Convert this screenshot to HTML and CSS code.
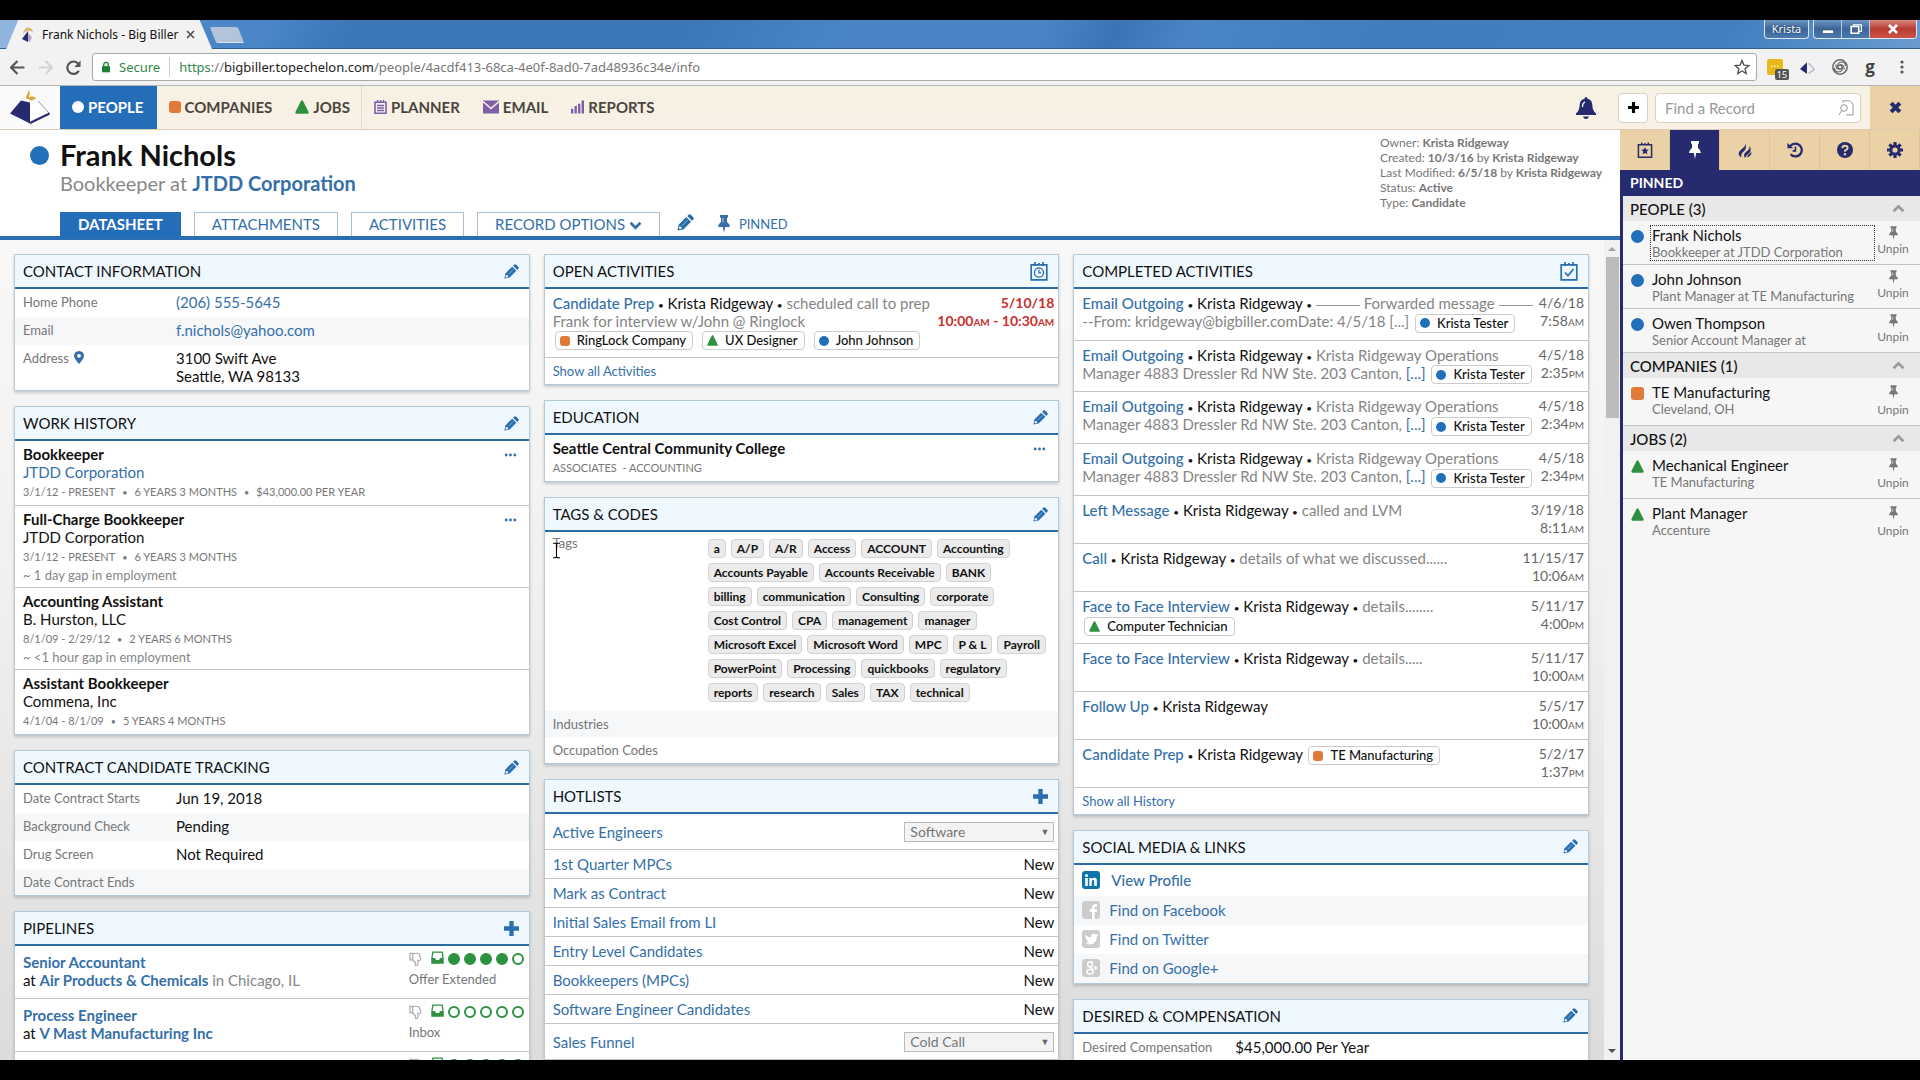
FILE: index.html
```html
<!DOCTYPE html>
<html lang="en">
<head>
  <meta charset="UTF-8">
  <meta name="viewport" content="width=device-width, initial-scale=1.0">
  <title>Frank Nichols - Big Biller</title>
  <link rel="stylesheet" href="styles.css">
</head>
<body>
  <!-- icon sprite -->
  <svg class="sprite" aria-hidden="true">
    <symbol id="i-pencil" viewBox="0 0 16 16"><path d="M.5 15.500l1-5.500L8.700 2.800l4.500 4.500L6 14.500zM9.700 1.900l1.400-1.400q.8-.6 1.600 0l2.800 2.800q.6.800 0 1.600l-1.400 1.400z"/><path d="M4.800 11l5-5" stroke="#9cc3e6" stroke-width=".8"/><circle cx="3" cy="13" r="1.300" fill="#e4f1fc"/></symbol>
    <symbol id="i-plus" viewBox="0 0 14 14"><path d="M5 0h4v5h5v4H9v5H5V9H0V5h5z"/></symbol>
    <symbol id="i-pin" viewBox="0 0 12 18"><path d="M2 0h8v2.200l-1 .7v4Q11.800 8.700 12 12H7.200L6 18l-1.200-6H0q.2-3.300 3-5.100v-4l-1-.7z"/><path d="M5 3v4.500" stroke="#fff" stroke-opacity=".7"/></symbol>
    <symbol id="i-triangle" viewBox="0 0 14 14"><path d="M7 1.500L12.500 12.500H1.500z" stroke="currentColor" stroke-width="2.400" stroke-linejoin="round"/></symbol>
    <symbol id="i-up" viewBox="0 0 12 8"><path d="M1.500 6.500L6 2l4.500 4.500" fill="none" stroke="currentColor" stroke-width="2.400"/></symbol>
    <symbol id="i-down" viewBox="0 0 14 10"><path d="M1.500 2L7 7.500 12.500 2" fill="none" stroke="currentColor" stroke-width="3"/></symbol>
    <symbol id="i-dots" viewBox="0 0 12 4"><circle cx="1.700" cy="2" r="1.400"/><circle cx="6" cy="2" r="1.400"/><circle cx="10.300" cy="2" r="1.400"/></symbol>
    <symbol id="i-thumb" viewBox="0 0 14 16"><path d="M1 1.500h3v7H1zM4 2q4-1.500 7 0l1.800 5.500q-.2 1.500-1.800 1.500H9.500q.5 3-.3 4.700-.7 1.300-2.200.8V11.500L4 8.500" fill="none" stroke="#aaa" stroke-width="1.300"/></symbol>
    <symbol id="i-inbox" viewBox="0 0 14 14"><path d="M1 7.500L2 1.300h10l1 6.200V13H1z" fill="#fff" stroke="#2d9140" stroke-width="1.400"/><path d="M1 7.500h3.300l1 2.300h3.400l1-2.300H13V13H1z" fill="#2d9140"/></symbol>
    <symbol id="i-cal-clock" viewBox="0 0 18 19"><path d="M1.200 2.800h15.600v15H1.200zM5 0v4M13 0v4M9 1v2.500" fill="none" stroke="currentColor" stroke-width="1.700"/><circle cx="9" cy="10.600" r="4.600" fill="none" stroke="currentColor" stroke-width="1.300"/><path d="M9 7.800v3h2.200" fill="none" stroke="currentColor" stroke-width="1.200"/></symbol>
    <symbol id="i-cal-check" viewBox="0 0 18 19"><path d="M1.200 2.800h15.600v15H1.200zM5 0v4M13 0v4M9 1v2.500" fill="none" stroke="currentColor" stroke-width="1.700"/><path d="M5 10.500l3 3.200L13.500 7" fill="none" stroke="currentColor" stroke-width="1.700"/></symbol>
    <symbol id="i-flame" viewBox="0 0 16 18"><path d="M8.500 0Q9.500 3.500 6 6.500T1.500 11Q-.5 15 4 17.500 2.800 13.500 6.200 11 10.500 8 8.500 0zM13.500 4.500Q13.500 8 10.500 10T7 14q-.5 2 1 4 2-4 5-5.500Q15.500 10 13.500 4.500zM15.300 11q-1.200 2-3.200 3-1.800 1.200-1.600 3.300Q15.500 16 15.300 11z"/></symbol>
    <symbol id="i-history" viewBox="0 0 18 18"><path d="M3.500 4.500Q6 1.800 9.500 1.800a7.200 7.200 0 1 1-5.500 12" fill="none" stroke="currentColor" stroke-width="2.500"/><path d="M.5 1l6.500 6H.5z"/><path d="M9.500 5v5H6.300" fill="none" stroke="currentColor" stroke-width="1.800"/></symbol>
    <symbol id="i-help" viewBox="0 0 16 16"><circle cx="8" cy="8" r="8"/><path d="M5.300 6.200Q5.500 3.800 8 3.800t2.700 2.100Q10.700 7.200 8 8.700v1" fill="none" stroke="#ead2a6" stroke-width="1.900"/><circle cx="8" cy="12.200" r="1.200" fill="#ead2a6"/></symbol>
    <symbol id="i-gear" viewBox="0 0 16 16"><path d="M8 0v16M0 8h16M2.400 2.400l11.200 11.200M13.600 2.400L2.400 13.600" stroke="currentColor" stroke-width="3.200"/><circle cx="8" cy="8" r="5.600"/><circle cx="8" cy="8" r="2.600" fill="#ead2a6"/></symbol>
    <symbol id="i-fav" viewBox="0 0 16 17"><path d="M1 2.800h14v13.400H1zM4.500.5v3M11.500.5v3M8 1v2" fill="none" stroke="currentColor" stroke-width="1.600"/><path d="M8 5.300l1.200 2.600 2.900.3-2.200 2 .6 2.900L8 11.600l-2.500 1.500.6-2.900-2.200-2 2.900-.3z"/></symbol>
    <symbol id="i-logo" viewBox="0 0 40 34"><path d="M19 0l1.500 5.500 6 2.700-5 2.300-6-2.500z" fill="#d9a53c"/><path d="M19 3.500v4.300l3-1.500z" fill="#f6ecd2"/><path d="M11 10.500l9 2V33.500L0 23.500z" fill="#262a6e"/><path d="M20 12.500l7-2L39.500 24 20 33.500z" fill="#fff"/><path d="M28 11l11.500 12.500" stroke="#77799f" stroke-width=".8"/><path d="M39.500 23.500L20 33" stroke="#262a6e" stroke-width="2"/></symbol>
  </svg>

  <div class="window">
    <!-- browser frame -->
    <div class="titlebar">
      <div class="tab-edge"></div>
      <div class="browser-tab">
        <svg class="favicon" viewBox="0 0 12 15"><path d="M1 7Q2 1 6 .5 11 1 11 6q-2-3-5-2.500Q3 4 1 7z" fill="#dcb470"/><path d="M6 4v11L0 12z" fill="#262a6e"/><path d="M6 6l4 4-2 5-2-1z" fill="#b9a9c4"/></svg>
        <span class="browser-tab-title">Frank Nichols - Big Biller</span>
        <svg class="tab-close" viewBox="0 0 9 9"><path d="M1 1l7 7M8 1L1 8" stroke="#555" stroke-width="1.700"/></svg>
      </div>
      <div class="new-tab"></div>
      <div class="win-controls">
        <button class="win-user">Krista</button>
        <div class="win-group">
          <button class="win-btn" aria-label="Minimize"><svg viewBox="0 0 12 10"><path d="M.5 6h11v3.500H.5z" fill="#fff" stroke="#345" stroke-width=".6"/></svg></button>
          <button class="win-btn" aria-label="Restore"><svg viewBox="0 0 12 10"><path d="M3.500.8h8v6.500h-8z" fill="none" stroke="#fff" stroke-width="1.300"/><path d="M1.200 2.500h7.500v6.700H1.200z" fill="#47668d" stroke="#fff" stroke-width="1.600"/></svg></button>
          <button class="win-btn win-close" aria-label="Close"><svg viewBox="0 0 12 10"><path d="M2 1l8 8M10 1L2 9" stroke="#fff" stroke-width="2.600"/></svg></button>
        </div>
      </div>
    </div>
    <div class="toolbar">
      <svg class="nav-arrow" viewBox="0 0 14 14"><path d="M13.500 7H1.500M7 1L1 7l6 6" fill="none" stroke="#555" stroke-width="2"/></svg>
      <svg class="nav-arrow" viewBox="0 0 14 14"><path d="M.5 7h12M7 1l6 6-6 6" fill="none" stroke="#d3d3d3" stroke-width="2"/></svg>
      <svg class="nav-arrow" viewBox="0 0 14 14"><path d="M12 10.200A5.800 5.800 0 1 1 11.500 3.500" fill="none" stroke="#555" stroke-width="2"/><path d="M13.600.5v6H7.800z" fill="#555"/></svg>
      <div class="address">
        <svg class="lock" viewBox="0 0 9 12"><path d="M0 5h9v7H0z" fill="#188038"/><path d="M2 5.500V3.300a2.500 2.500 0 0 1 5 0v2.200" fill="none" stroke="#188038" stroke-width="1.500"/></svg>
        <span class="secure">Secure</span>
        <span class="url"><span class="green">https</span>://<b>bigbiller.topechelon.com</b>/people/4acdf413-68ca-4e0f-8ad0-7ad48936c34e/info</span>
        <svg class="star" viewBox="0 0 16 16"><path d="M8 1.500l1.900 4.600 4.900.4-3.700 3.200 1.100 4.800L8 12l-4.200 2.500 1.100-4.800L1.200 6.500l4.900-.4z" fill="none" stroke="#555" stroke-width="1.400"/></svg>
      </div>
      <div class="extensions">
        <span class="ext-note">...<span class="ext-badge">15</span></span>
        <svg class="ext-logo" viewBox="0 0 14 14"><path d="M6.500 2v11L0 8.500z" fill="#262a6e"/><path d="M8 3l5.500 6L8 12.500" fill="none" stroke="#b5b5c8" stroke-width="1.200"/></svg>
        <svg class="ext-swirl line-icon" viewBox="0 0 16 16" stroke="#666"><circle cx="8" cy="8" r="7.200" stroke-width="1.500"/><circle cx="8" cy="8" r="2" stroke-width="1.300"/><path d="M6 8Q4.500 3.500 10 3q3.500.5 3.500 4M10 8q1.500 4.500-4 5Q2.500 12.500 2.500 9M8 6q4.500-.5 4 4.500M8 10q-4.500.5-4-4.500" stroke-width="1.200"/></svg>
        <span class="ext-g">g</span>
        <svg class="ext-menu" viewBox="0 0 4 14"><circle cx="2" cy="2" r="1.600"/><circle cx="2" cy="7" r="1.600"/><circle cx="2" cy="12" r="1.600"/></svg>
      </div>
    </div>

    <!-- main navigation -->
    <header class="app-nav">
      <a class="logo" href="#" aria-label="Big Biller"><svg><use href="#i-logo"/></svg></a>
      <nav class="nav-links">
        <a class="active" href="#"><i class="dot white"></i>PEOPLE</a>
        <a href="#"><i class="sq"></i>COMPANIES</a>
        <a href="#"><svg class="tri"><use href="#i-triangle"/></svg>JOBS</a>
        <a class="divided" href="#"><svg class="purple" viewBox="0 0 13 14"><path d="M1 2.200h11v11H1z" fill="none" stroke="currentColor" stroke-width="1.600"/><path d="M3.500 0v3M6.500 0v3M9.500 0v3M3 5.500h7M3 8h7M3 10.500h7" stroke="currentColor" stroke-width="1.500"/></svg>PLANNER</a>
        <a href="#"><svg class="purple wide" viewBox="0 0 16 13"><path d="M0 0h16v13H0z"/><path d="M0 1l8 7 8-7" fill="none" stroke="#f8f1e3" stroke-width="1.600"/></svg>EMAIL</a>
        <a href="#"><svg class="purple" viewBox="0 0 14 14"><path d="M0 9h2.500v5H0zM3.800 6h2.500v8H3.800zM7.600 3.500h2.500V14H7.600zM11.400 0H14v14h-2.600z"/></svg>REPORTS</a>
      </nav>
      <div class="nav-tools">
        <button class="bell" aria-label="Notifications"><svg viewBox="0 0 20 22"><path d="M10 0q1.500 0 1.500 1.700 4.500 1 4.800 6 .2 6 3.700 8.800v1.500H0v-1.500q3.500-2.800 3.700-8.800.3-5 4.800-6Q8.500 0 10 0zM7 19.500h6q-.8 2.500-3 2.500t-3-2.500z"/><path d="M6.500 10q0-4 2.500-4.800" fill="none" stroke="#fff" stroke-width="1.300"/></svg></button>
        <button class="add" aria-label="Add record"><svg><use href="#i-plus"/></svg></button>
        <div class="search">
          <input type="text" placeholder="Find a Record" aria-label="Find a Record">
          <svg class="line-icon" viewBox="0 0 16 16" stroke="#999"><path d="M5 3V.8h6.500L15 4v11H8"/><circle cx="6" cy="8" r="3.300"/><path d="M3.800 10.500L.8 15"/></svg>
        </div>
      </div>
      <button class="side-close" aria-label="Close sidebar"><svg viewBox="0 0 12 12"><path d="M2 2l8 8M10 2l-8 8" stroke="currentColor" stroke-width="3.800"/></svg></button>
    </header>

    <div class="app-body">
      <main class="record">
        <section class="record-head">
          <div class="record-title">
            <i class="dot big"></i>
            <div>
              <h1>Frank Nichols</h1>
              <p class="subtitle">Bookkeeper at <a href="#">JTDD Corporation</a></p>
            </div>
          </div>
          <div class="record-meta">
            <div>Owner: <b>Krista Ridgeway</b></div>
            <div>Created: <b>10/3/16</b> by <b>Krista Ridgeway</b></div>
            <div>Last Modified: <b>6/5/18</b> by <b>Krista Ridgeway</b></div>
            <div>Status: <b>Active</b></div>
            <div>Type: <b>Candidate</b></div>
          </div>
          <div class="record-tabs">
            <a class="active" href="#">DATASHEET</a>
            <a href="#">ATTACHMENTS</a>
            <a href="#">ACTIVITIES</a>
            <a href="#">RECORD OPTIONS <svg class="caret"><use href="#i-down"/></svg></a>
            <button class="head-edit" aria-label="Edit"><svg><use href="#i-pencil"/></svg></button>
            <button class="head-pin"><svg><use href="#i-pin"/></svg>PINNED</button>
          </div>
        </section>

        <div class="scroll-area">
          <div class="columns">
            <div class="column">
              <section class="panel">
                <h2>CONTACT INFORMATION <button aria-label="Edit contact information"><svg><use href="#i-pencil"/></svg></button></h2>
                <dl class="fields">
                  <div><dt>Home Phone</dt><dd><a href="#">(206) 555-5645</a></dd></div>
                  <div><dt>Email</dt><dd><a href="#">f.nichols@yahoo.com</a></dd></div>
                  <div class="tall"><dt>Address <svg class="marker" viewBox="0 0 10 13"><path d="M5 0q5 .3 5 5Q9.500 8 5 13 .5 8 0 5 0 .3 5 0z"/><circle cx="5" cy="4.800" r="1.900" fill="#fff"/></svg></dt><dd>3100 Swift Ave<br>Seattle, WA 98133</dd></div>
                </dl>
              </section>

              <section class="panel">
                <h2>WORK HISTORY <button aria-label="Edit work history"><svg><use href="#i-pencil"/></svg></button></h2>
                <div class="job">
                  <button class="more" aria-label="More"><svg><use href="#i-dots"/></svg></button>
                  <h3>Bookkeeper</h3>
                  <a href="#">JTDD Corporation</a>
                  <p class="caps"><span>3/1/12 - PRESENT</span><span>6 YEARS 3 MONTHS</span><span>$43,000.00 PER YEAR</span></p>
                </div>
                <div class="job">
                  <button class="more" aria-label="More"><svg><use href="#i-dots"/></svg></button>
                  <h3>Full-Charge Bookkeeper</h3>
                  <div>JTDD Corporation</div>
                  <p class="caps"><span>3/1/12 - PRESENT</span><span>6 YEARS 3 MONTHS</span></p>
                  <p class="gap-note">~ 1 day gap in employment</p>
                </div>
                <div class="job">
                  <h3>Accounting Assistant</h3>
                  <div>B. Hurston, LLC</div>
                  <p class="caps"><span>8/1/09 - 2/29/12</span><span>2 YEARS 6 MONTHS</span></p>
                  <p class="gap-note">~ &lt;1 hour gap in employment</p>
                </div>
                <div class="job">
                  <h3>Assistant Bookkeeper</h3>
                  <div>Commena, Inc</div>
                  <p class="caps"><span>4/1/04 - 8/1/09</span><span>5 YEARS 4 MONTHS</span></p>
                </div>
              </section>

              <section class="panel">
                <h2>CONTRACT CANDIDATE TRACKING <button aria-label="Edit contract candidate tracking"><svg><use href="#i-pencil"/></svg></button></h2>
                <dl class="fields">
                  <div><dt>Date Contract Starts</dt><dd>Jun 19, 2018</dd></div>
                  <div><dt>Background Check</dt><dd>Pending</dd></div>
                  <div><dt>Drug Screen</dt><dd>Not Required</dd></div>
                  <div class="short"><dt>Date Contract Ends</dt><dd></dd></div>
                </dl>
              </section>

              <section class="panel">
                <h2>PIPELINES <button aria-label="Add pipeline"><svg><use href="#i-plus"/></svg></button></h2>
                <div class="pipeline">
                  <div><a class="strong" href="#">Senior Accountant</a><br>at <a class="strong" href="#">Air Products &amp; Chemicals</a> <span class="muted">in Chicago, IL</span></div>
                  <div class="stage">
                    <div class="steps"><svg class="thumb"><use href="#i-thumb"/></svg><svg class="inbox"><use href="#i-inbox"/></svg><i class="on"></i><i class="on"></i><i class="on"></i><i class="on"></i><i></i></div>
                    <span>Offer Extended</span>
                  </div>
                </div>
                <div class="pipeline">
                  <div><a class="strong" href="#">Process Engineer</a><br>at <a class="strong" href="#">V Mast Manufacturing Inc</a></div>
                  <div class="stage">
                    <div class="steps"><svg class="thumb"><use href="#i-thumb"/></svg><svg class="inbox"><use href="#i-inbox"/></svg><i></i><i></i><i></i><i></i><i></i></div>
                    <span>Inbox</span>
                  </div>
                </div>
                <div class="pipeline">
                  <div></div>
                  <div class="stage">
                    <div class="steps"><svg class="thumb"><use href="#i-thumb"/></svg><svg class="inbox"><use href="#i-inbox"/></svg><i class="on"></i><i class="on"></i><i class="on"></i><i class="on"></i><i class="on"></i></div>
                  </div>
                </div>
              </section>
            </div>

            <div class="column">
              <section class="panel">
                <h2>OPEN ACTIVITIES <button class="cal" aria-label="Schedule activity"><svg><use href="#i-cal-clock"/></svg></button></h2>
                <div class="activity">
                  <div class="what"><a href="#">Candidate Prep</a> <b class="sep">•</b> Krista Ridgeway <b class="sep">•</b> <span class="muted">scheduled call to prep<br>Frank for interview w/John @ Ringlock</span>
                    <div class="chips"><span class="chip"><i class="sq"></i>RingLock Company</span><span class="chip"><svg class="tri"><use href="#i-triangle"/></svg>UX Designer</span><span class="chip"><i class="dot"></i>John Johnson</span></div>
                  </div>
                  <div class="when late">5/10/18<br>10:00<small>AM</small> - 10:30<small>AM</small></div>
                </div>
                <a class="show-all" href="#">Show all Activities</a>
              </section>

              <section class="panel">
                <h2>EDUCATION <button aria-label="Edit education"><svg><use href="#i-pencil"/></svg></button></h2>
                <div class="job">
                  <button class="more" aria-label="More"><svg><use href="#i-dots"/></svg></button>
                  <h3>Seattle Central Community College</h3>
                  <p class="caps">ASSOCIATES &nbsp;- ACCOUNTING</p>
                </div>
              </section>

              <section class="panel">
                <h2>TAGS &amp; CODES <button aria-label="Edit tags and codes"><svg><use href="#i-pencil"/></svg></button></h2>
                <dl class="fields">
                  <div class="tag-row"><dt>Tags</dt>
                    <dd class="tags">
                      <div><span>a</span><span>A/P</span><span>A/R</span><span>Access</span><span>ACCOUNT</span><span>Accounting</span></div>
                      <div><span>Accounts Payable</span><span>Accounts Receivable</span><span>BANK</span></div>
                      <div><span>billing</span><span>communication</span><span>Consulting</span><span>corporate</span></div>
                      <div><span>Cost Control</span><span>CPA</span><span>management</span><span>manager</span></div>
                      <div><span>Microsoft Excel</span><span>Microsoft Word</span><span>MPC</span><span>P &amp; L</span><span>Payroll</span></div>
                      <div><span>PowerPoint</span><span>Processing</span><span>quickbooks</span><span>regulatory</span></div>
                      <div><span>reports</span><span>research</span><span>Sales</span><span>TAX</span><span>technical</span></div>
                    </dd>
                    <svg class="text-cursor" viewBox="0 0 8 18"><path d="M0 .7h3l1 .8 1-.8h3M0 17.300h3l1-.8 1 .8h3M4 1.500v15" fill="none" stroke="#000" stroke-width="1.300"/></svg>
                  </div>
                  <div class="short"><dt>Industries</dt><dd></dd></div>
                  <div class="short"><dt>Occupation Codes</dt><dd></dd></div>
                </dl>
              </section>

              <section class="panel">
                <h2>HOTLISTS <button aria-label="Add to hotlist"><svg><use href="#i-plus"/></svg></button></h2>
                <div class="hotlist with-select"><a href="#">Active Engineers</a><span class="select"><select aria-label="Active Engineers stage"><option>Software</option></select></span></div>
                <div class="hotlist"><a href="#">1st Quarter MPCs</a><span>New</span></div>
                <div class="hotlist"><a href="#">Mark as Contract</a><span>New</span></div>
                <div class="hotlist"><a href="#">Initial Sales Email from LI</a><span>New</span></div>
                <div class="hotlist"><a href="#">Entry Level Candidates</a><span>New</span></div>
                <div class="hotlist"><a href="#">Bookkeepers (MPCs)</a><span>New</span></div>
                <div class="hotlist"><a href="#">Software Engineer Candidates</a><span>New</span></div>
                <div class="hotlist with-select"><a href="#">Sales Funnel</a><span class="select"><select aria-label="Sales Funnel stage"><option>Cold Call</option></select></span></div>
              </section>
            </div>

            <div class="column">
              <section class="panel">
                <h2>COMPLETED ACTIVITIES <button class="cal" aria-label="Log activity"><svg><use href="#i-cal-check"/></svg></button></h2>
                <div class="activity">
                  <div class="what"><a href="#">Email Outgoing</a> <b class="sep">•</b> Krista Ridgeway <b class="sep">•</b> <span class="muted"><i class="rule"></i> Forwarded message <i class="rule short-rule"></i><br>--From: kridgeway@bigbiller.comDate: 4/5/18 [...]</span> <span class="chip"><i class="dot"></i>Krista Tester</span></div>
                  <div class="when">4/6/18<br>7:58<small>AM</small></div>
                </div>
                <div class="activity">
                  <div class="what"><a href="#">Email Outgoing</a> <b class="sep">•</b> Krista Ridgeway <b class="sep">•</b> <span class="muted">Krista Ridgeway Operations<br>Manager 4883 Dressler Rd NW Ste. 203 Canton,</span> <a class="thin" href="#">[...]</a> <span class="chip"><i class="dot"></i>Krista Tester</span></div>
                  <div class="when">4/5/18<br>2:35<small>PM</small></div>
                </div>
                <div class="activity">
                  <div class="what"><a href="#">Email Outgoing</a> <b class="sep">•</b> Krista Ridgeway <b class="sep">•</b> <span class="muted">Krista Ridgeway Operations<br>Manager 4883 Dressler Rd NW Ste. 203 Canton,</span> <a class="thin" href="#">[...]</a> <span class="chip"><i class="dot"></i>Krista Tester</span></div>
                  <div class="when">4/5/18<br>2:34<small>PM</small></div>
                </div>
                <div class="activity">
                  <div class="what"><a href="#">Email Outgoing</a> <b class="sep">•</b> Krista Ridgeway <b class="sep">•</b> <span class="muted">Krista Ridgeway Operations<br>Manager 4883 Dressler Rd NW Ste. 203 Canton,</span> <a class="thin" href="#">[...]</a> <span class="chip"><i class="dot"></i>Krista Tester</span></div>
                  <div class="when">4/5/18<br>2:34<small>PM</small></div>
                </div>
                <div class="activity">
                  <div class="what"><a href="#">Left Message</a> <b class="sep">•</b> Krista Ridgeway <b class="sep">•</b> <span class="muted">called and LVM</span></div>
                  <div class="when">3/19/18<br>8:11<small>AM</small></div>
                </div>
                <div class="activity">
                  <div class="what"><a href="#">Call</a> <b class="sep">•</b> Krista Ridgeway <b class="sep">•</b> <span class="muted">details of what we discussed......</span></div>
                  <div class="when">11/15/17<br>10:06<small>AM</small></div>
                </div>
                <div class="activity">
                  <div class="what"><a href="#">Face to Face Interview</a> <b class="sep">•</b> Krista Ridgeway <b class="sep">•</b> <span class="muted">details........</span><br><span class="chip"><svg class="tri"><use href="#i-triangle"/></svg>Computer Technician</span></div>
                  <div class="when">5/11/17<br>4:00<small>PM</small></div>
                </div>
                <div class="activity">
                  <div class="what"><a href="#">Face to Face Interview</a> <b class="sep">•</b> Krista Ridgeway <b class="sep">•</b> <span class="muted">details.....</span></div>
                  <div class="when">5/11/17<br>10:00<small>AM</small></div>
                </div>
                <div class="activity">
                  <div class="what"><a href="#">Follow Up</a> <b class="sep">•</b> Krista Ridgeway</div>
                  <div class="when">5/5/17<br>10:00<small>AM</small></div>
                </div>
                <div class="activity">
                  <div class="what"><a href="#">Candidate Prep</a> <b class="sep">•</b> Krista Ridgeway <span class="chip"><i class="sq"></i>TE Manufacturing</span></div>
                  <div class="when">5/2/17<br>1:37<small>PM</small></div>
                </div>
                <a class="show-all" href="#">Show all History</a>
              </section>

              <section class="panel">
                <h2>SOCIAL MEDIA &amp; LINKS <button aria-label="Edit social media"><svg><use href="#i-pencil"/></svg></button></h2>
                <ul class="social">
                  <li class="linked"><svg viewBox="0 0 18 18"><rect width="18" height="18" rx="3" fill="#0e76a8"/><circle cx="4.500" cy="4.400" r="1.500" fill="#fff"/><path d="M3.200 7h2.600v8H3.200zM7.300 7h2.500v1q3-2.500 5 .3V15h-2.600v-5q-1-2-2.400 0v5H7.300z" fill="#fff"/></svg><a href="#">View Profile</a></li>
                  <li><svg viewBox="0 0 18 18"><rect width="18" height="18" rx="3" fill="#ccc"/><path d="M10 18v-7H7.800V8.300H10V6q.2-3.300 5-3v2.500q-2.300-.3-2.300 1v1.800H15l-.4 2.700h-1.900v7z" fill="#fff"/></svg><a href="#">Find on Facebook</a></li>
                  <li><svg viewBox="0 0 18 18"><rect width="18" height="18" rx="3" fill="#ccc"/><path d="M3 4.500q2.500 2.800 6 2.800-.2-3.500 3-3.500 1.300 0 2 .8l1.700-.6-1 1.600 1.300-.2-1.200 1.300q0 7.300-6.800 7.800-3 0-5-1.400 2.400.2 4-1-2-.3-2.600-2h1.200Q3.500 9.300 3.400 7.300l1.200.3Q2.600 6.500 3 4.500z" fill="#fff"/></svg><a href="#">Find on Twitter</a></li>
                  <li><svg viewBox="0 0 18 18"><rect width="18" height="18" rx="3" fill="#ccc"/><g fill="none" stroke="#fff" stroke-width="1.500"><circle cx="8" cy="5.500" r="2.400"/><ellipse cx="8" cy="12.700" rx="3.200" ry="2.200"/><path d="M7 3h4M8.500 8l2 2.500M13.500 7v4M11.500 9h4"/></g></svg><a href="#">Find on Google+</a></li>
                </ul>
              </section>

              <section class="panel">
                <h2>DESIRED &amp; COMPENSATION <button aria-label="Edit desired compensation"><svg><use href="#i-pencil"/></svg></button></h2>
                <dl class="fields">
                  <div><dt>Desired Compensation</dt><dd>$45,000.00 Per Year</dd></div>
                </dl>
              </section>
            </div>
          </div>
          <div class="scrollbar"><i class="arrow-up"></i><i class="track-thumb"></i><i class="arrow-down"></i></div>
        </div>
      </main>

      <aside class="sidebar">
        <div class="side-tabs">
          <button aria-label="Favorites"><svg><use href="#i-fav"/></svg></button>
          <button class="active" aria-label="Pinned"><svg><use href="#i-pin"/></svg></button>
          <button aria-label="Hot"><svg><use href="#i-flame"/></svg></button>
          <button aria-label="History"><svg><use href="#i-history"/></svg></button>
          <button aria-label="Help"><svg><use href="#i-help"/></svg></button>
          <button aria-label="Settings"><svg><use href="#i-gear"/></svg></button>
        </div>
        <h2 class="side-title">PINNED</h2>
        <h3>PEOPLE (3) <svg><use href="#i-up"/></svg></h3>
        <div class="pinned"><i class="dot"></i><a class="focused" href="#">Frank Nichols<span>Bookkeeper at JTDD Corporation</span></a><button><svg><use href="#i-pin"/></svg>Unpin</button></div>
        <div class="pinned"><i class="dot"></i><a href="#">John Johnson<span>Plant Manager at TE Manufacturing</span></a><button><svg><use href="#i-pin"/></svg>Unpin</button></div>
        <div class="pinned"><i class="dot"></i><a href="#">Owen Thompson<span>Senior Account Manager at</span></a><button><svg><use href="#i-pin"/></svg>Unpin</button></div>
        <h3>COMPANIES (1) <svg><use href="#i-up"/></svg></h3>
        <div class="pinned roomy"><i class="sq"></i><a href="#">TE Manufacturing<span>Cleveland, OH</span></a><button><svg><use href="#i-pin"/></svg>Unpin</button></div>
        <h3>JOBS (2) <svg><use href="#i-up"/></svg></h3>
        <div class="pinned roomy"><svg class="tri"><use href="#i-triangle"/></svg><a href="#">Mechanical Engineer<span>TE Manufacturing</span></a><button><svg><use href="#i-pin"/></svg>Unpin</button></div>
        <div class="pinned roomy"><svg class="tri"><use href="#i-triangle"/></svg><a href="#">Plant Manager<span>Accenture</span></a><button><svg><use href="#i-pin"/></svg>Unpin</button></div>
      </aside>
    </div>
  </div>
</body>
</html>
```

FILE: styles.css
```css
* {
  box-sizing: border-box;
}
body {
  margin: 0;
  padding: 20px 0;
  background: #000;
  color: #111;
  font: 15px/18px Lato, "Open Sans", sans-serif;
  height: 100vh;
  overflow: hidden;
}
h1, h2, h3, p, dl, dd, ul {
  margin: 0;
  padding: 0;
}
a {
  color: #356fa8;
  text-decoration: none;
}
button {
  padding: 0;
  border: 0;
  background: none;
  font: inherit;
  color: inherit;
}
svg {
  fill: currentColor;
  flex: none;
}
.line-icon {
  fill: none;
}
.sprite {
  position: absolute;
  width: 0;
  height: 0;
}
.window {
  height: 100%;
  display: flex;
  flex-direction: column;
  background: #fff;
  overflow: hidden;
}
.muted {
  color: #858585;
}

/* record type markers */
.dot, .sq {
  flex: none;
  display: inline-block;
  width: 12px;
  height: 12px;
  background: #2270ba;
  border-radius: 50%;
}
.sq {
  background: #e07a38;
  border-radius: 3px;
}
.dot.white {
  background: #fff;
}
.dot.big {
  width: 19px;
  height: 19px;
}
.tri {
  width: 14px;
  height: 14px;
  color: #2d9140;
}

/* browser frame */
.titlebar {
  flex: none;
  height: 29px;
  display: flex;
  background: linear-gradient(115deg, #4a86c8 0, #4a86c8 14%, #3a78b8 18%, #3a78b8 36%, #4a86c6 44%, #4a86c6 54%, #3a74b4 58%, #4a86c6 62%, #3f7dbd 72%, #4280c0 90%, #6b9bd0 100%);
  border-bottom: 1px solid #35618f;
  font: 12px/28px "Noto Sans", sans-serif;
}
.tab-edge {
  width: 20px;
  margin-right: -14px;
  background: #8fb4dd;
  clip-path: polygon(0 0, 100% 0, 30% 100%, 0 100%);
}
.browser-tab {
  width: 206px;
  padding: 0 22px 0 16px;
  display: flex;
  align-items: center;
  gap: 8px;
  height: 29px;
  background: #f2f2f2;
  clip-path: polygon(6% 0, 94% 0, 100% 100%, 0 100%);
}
.browser-tab-title {
  flex: 1;
  white-space: nowrap;
}
.favicon {
  width: 12px;
  height: 15px;
}
.tab-close {
  width: 9px;
  height: 9px;
}
.new-tab {
  width: 28px;
  height: 16px;
  margin: 7px 0 0 1px;
  background: #b3c3da;
  border-bottom: 1px solid #d7e3f0;
  transform: skewX(22deg);
  border-radius: 2px;
}
.win-controls {
  margin-left: auto;
  padding-right: 3px;
  display: flex;
  gap: 4px;
  height: 19px;
}
.win-user, .win-group {
  border: 1px solid #dbe7f4;
  border-top: 0;
  border-radius: 0 0 4px 4px;
  background: linear-gradient(#6f97c4, #3c6699 50%, #4a7ab0);
  color: #fff;
  overflow: hidden;
}
.win-user {
  width: 45px;
  font-size: 11px;
  line-height: 16px;
  text-shadow: 0 0 2px #123;
}
.win-group {
  display: flex;
}
.win-btn {
  width: 28px;
  display: flex;
  align-items: center;
  justify-content: center;
  border-right: 1px solid #b9cde4;
}
.win-btn svg {
  width: 12px;
  height: 10px;
}
.win-close {
  width: 46px;
  border: 0;
  background: linear-gradient(#d98a80, #b83a30 50%, #cc5546);
}
.toolbar {
  flex: none;
  height: 37px;
  padding: 4px 16px 4px 10px;
  display: flex;
  align-items: center;
  gap: 13px;
  background: #f2f2f2;
  border-bottom: 1px solid #b5b5b5;
  font: 13px/20px "Noto Sans", sans-serif;
}
.nav-arrow {
  width: 15px;
  height: 15px;
}
.address {
  flex: 1;
  height: 28px;
  margin-left: -2px;
  padding: 0 6px 0 9px;
  display: flex;
  align-items: center;
  gap: 9px;
  background: #fff;
  border: 1px solid #aaa;
  border-radius: 3px;
}
.lock {
  width: 8px;
  height: 12px;
}
.secure {
  padding-right: 9px;
  border-right: 1px solid #ccc;
  color: #2f8a4a;
}
.url {
  flex: 1;
  color: #777;
}
.url b {
  color: #222;
  font-weight: 400;
}
.green {
  color: #2f8a4a;
}
.star {
  width: 16px;
  height: 16px;
}
.extensions {
  display: flex;
  align-items: center;
  justify-content: space-between;
  width: 137px;
  margin-left: -3px;
}
.ext-note {
  position: relative;
  width: 16px;
  height: 16px;
  background: #e8b91c;
  color: #fff;
  font-size: 11px;
  line-height: 8px;
  text-align: center;
  border-radius: 2px;
}
.ext-badge {
  position: absolute;
  left: 8px;
  top: 10px;
  width: 14px;
  background: #555;
  border-radius: 2px;
  font-size: 9px;
  line-height: 11px;
}
.ext-logo {
  width: 15px;
  height: 15px;
}
.ext-swirl {
  width: 16px;
  height: 16px;
}
.ext-g {
  padding-right: 8px;
  font: bold 17px/18px "Open Sans", sans-serif;
  color: #444;
}
.ext-menu {
  width: 4px;
  height: 14px;
  color: #555;
}

/* main navigation */
.app-nav {
  flex: none;
  height: 44px;
  display: flex;
  background: linear-gradient(#f6f2e2, #f9f0e6);
  border-bottom: 1px solid #dccbb4;
  color: #4a4540;
}
.logo {
  width: 60px;
  padding: 4px 10px;
  background: #fafafa;
}
.logo svg {
  width: 40px;
  height: 34px;
}
.nav-links {
  display: flex;
}
.nav-links a {
  display: flex;
  align-items: center;
  gap: 4px;
  padding: 0 11px 2px 12px;
  color: #4a4540;
  font-size: 15px;
  font-weight: 700;
}
.nav-links .active {
  padding-right: 13px;
  background: #246eb9;
  color: #fff;
}
.nav-links .divided {
  border-left: 1px solid #e6dccb;
}
.purple {
  width: 13px;
  height: 14px;
  color: #7d5fa8;
}
.purple.wide {
  width: 16px;
}
.nav-tools {
  margin-left: auto;
  display: flex;
  align-items: center;
  gap: 7px;
  padding-right: 9px;
}
.bell {
  width: 20px;
  height: 22px;
  margin-right: 15px;
  color: #262a6e;
}
.add {
  width: 30px;
  height: 30px;
  display: flex;
  align-items: center;
  justify-content: center;
  background: #fff;
  border: 1px solid #d8d0c2;
  border-radius: 4px;
  color: #000;
}
.add svg {
  width: 11px;
  height: 11px;
}
.search {
  width: 206px;
  height: 30px;
  padding: 0 6px 0 9px;
  display: flex;
  align-items: center;
  background: #fff;
  border: 1px solid #d8d0c2;
  border-radius: 4px;
}
.search input {
  flex: 1;
  min-width: 0;
  padding: 0;
  border: 0;
  outline: 0;
  font: 15px/20px Lato, sans-serif;
}
.search input::placeholder {
  color: #999;
}
.search svg {
  width: 16px;
  height: 16px;
}
.side-close {
  width: 50px;
  background: #ead2a6;
  color: #262a6e;
}
.side-close svg {
  width: 13px;
  height: 13px;
}

/* record header */
.app-body {
  flex: 1;
  min-height: 0;
  display: flex;
}
.record {
  flex: 1;
  min-width: 0;
  display: flex;
  flex-direction: column;
}
.record-head {
  flex: none;
  display: grid;
  grid-template-columns: 1fr 240px;
  border-bottom: 4px solid #2a6fb3;
}
.record-title {
  display: flex;
  gap: 11px;
  padding: 10px 0 0 30px;
}
.record-title .dot {
  margin-top: 6px;
}
h1 {
  font-size: 29px;
  line-height: 30px;
  font-weight: 700;
}
.subtitle {
  font-size: 20px;
  line-height: 26px;
  color: #888;
}
.subtitle a {
  font-weight: 700;
}
.record-meta {
  padding-top: 5px;
  height: 82px;
  font-size: 12px;
  line-height: 15px;
  color: #777;
}
.record-meta b {
  font-weight: 700;
}
.record-tabs {
  grid-column: 1 / 3;
  display: flex;
  gap: 13px;
  padding-left: 60px;
}
.record-tabs a {
  height: 24px;
  padding: 0 17px;
  border: 1px solid #a9bfd4;
  border-bottom: 0;
  font-size: 15px;
  line-height: 23px;
}
.record-tabs .active {
  background: #246eb9;
  border-color: #246eb9;
  color: #fff;
  font-weight: 700;
}
.caret {
  width: 13px;
  height: 9px;
}
.head-edit {
  margin-left: 4px;
  color: #2a6ca8;
}
.head-edit svg {
  width: 17px;
  height: 17px;
}
.head-pin {
  margin-left: 11px;
  display: flex;
  align-items: center;
  gap: 9px;
  color: #356fa8;
  font-size: 13px;
}
.head-pin svg {
  width: 12px;
  height: 18px;
}

/* datasheet */
.scroll-area {
  flex: 1;
  min-height: 0;
  display: flex;
  overflow: hidden;
  background: linear-gradient(#f8f8f8, #f1f1f1 40%, #dcdcdc);
}
.columns {
  flex: 1;
  min-width: 0;
  height: 0;
  display: grid;
  grid-template-columns: repeat(3, minmax(0, 1fr));
  gap: 14px;
  padding: 14px 15px 0 14px;
}
.panel {
  margin-bottom: 15px;
  background: #fff;
  border: 1px solid #b5cad9;
  box-shadow: 0 2px 3px rgba(0, 0, 0, .18);
}
.panel h2 {
  height: 34px;
  padding: 0 10px 0 8px;
  display: flex;
  align-items: center;
  justify-content: space-between;
  background: #f0f8ff;
  border-bottom: 2px solid #2c6b9f;
  font-size: 15px;
  font-weight: 400;
}
.panel h2 button {
  display: flex;
  color: #2a6db0;
}
.panel h2 svg {
  width: 15px;
  height: 15px;
}
.panel h2 .cal svg {
  width: 18px;
  height: 19px;
}
.fields > div {
  display: flex;
  height: 28px;
  padding: 0 8px;
  line-height: 26px;
  position: relative;
}
.fields > div:nth-child(even) {
  background: #f5f7f9;
}
.fields > .tall {
  height: auto;
  padding-bottom: 5px;
}
.tall dd {
  padding-top: 4px;
  line-height: 18px;
}
.fields > .short {
  height: 26px;
}
dt {
  width: 153px;
  flex: none;
  font-size: 13px;
  color: #777;
}
.marker {
  width: 10px;
  height: 13px;
  margin: 0 0 -1px 2px;
  color: #356fa8;
}
.job {
  position: relative;
  padding: 4px 8px 3px;
  border-bottom: 1px solid #c4c4c4;
}
.job:last-child {
  border-bottom: 0;
}
.job h3 {
  font-size: 15px;
  line-height: 18px;
  font-weight: 700;
}
.more {
  position: absolute;
  right: 12px;
  top: 5px;
  display: flex;
  height: 18px;
  align-items: center;
  color: #356fa8;
}
.more svg {
  width: 13px;
  height: 4px;
}
.caps {
  font-size: 11px;
  line-height: 21px;
  color: #777;
}
.caps span + span::before {
  content: "•";
  padding: 0 7px;
  font-size: 9px;
  line-height: 1;
}
.gap-note {
  font-size: 13px;
  line-height: 17px;
  color: #858585;
}
.pipeline {
  display: flex;
  justify-content: space-between;
  height: 53px;
  padding: 7px 4px 0 8px;
  border-bottom: 1px solid #c4c4c4;
}
.strong {
  font-weight: 700;
}
.stage {
  width: 116px;
  font-size: 13px;
  color: #777;
}
.steps {
  display: flex;
  align-items: center;
  gap: 4px;
  height: 16px;
  margin: -2px 0 3px;
}
.steps i {
  width: 12px;
  height: 12px;
  border: 2px solid #2d9140;
  border-radius: 50%;
}
.steps .on {
  background: #2d9140;
}
.thumb {
  width: 13px;
  height: 15px;
  margin-right: 5px;
}
.inbox {
  width: 13px;
  height: 13px;
  margin-top: -3px;
}
.activity {
  display: flex;
  justify-content: space-between;
  padding: 5px 4px 6px 8px;
  border-bottom: 1px solid #c4c4c4;
  white-space: nowrap;
}
.activity a {
  font-weight: 500;
}
.activity .thin {
  font-weight: 400;
}
.sep {
  font-size: 10px;
  line-height: 1;
  font-weight: 400;
}
.when {
  text-align: right;
  font-size: 14px;
  color: #666;
}
.when small {
  font-size: 10px;
  line-height: 1;
}
.late {
  color: #c9302c;
  font-weight: 700;
}
.chips {
  display: flex;
  gap: 5px;
}
.chip {
  display: inline-flex;
  align-items: center;
  gap: 7px;
  height: 19px;
  margin: 1px 2px;
  padding: 0 6px 0 4px;
  border: 1px solid #ccc;
  border-radius: 4px;
  font-size: 13px;
  line-height: 17px;
  font-weight: 500;
  vertical-align: middle;
}
.chip .dot, .chip .sq {
  width: 10px;
  height: 10px;
}
.chip .tri {
  width: 11px;
  height: 11px;
}
.rule {
  display: inline-block;
  width: 44px;
  border-top: 1px solid #999;
  vertical-align: middle;
}
.short-rule {
  width: 34px;
}
.show-all {
  display: block;
  padding: 4px 8px;
  font-size: 13px;
}
.fields > .tag-row {
  height: auto;
  padding-bottom: 9px;
  line-height: 24px;
}
.tag-row dt {
  line-height: 22px;
}
.tags {
  padding: 7px 0 0 2px;
}
.tags div {
  display: flex;
  gap: 5px;
  margin-bottom: 5px;
}
.tags div:last-child {
  margin-bottom: 0;
}
.tags span {
  padding: 0 5px;
  background: #ebebeb;
  border: 1px solid #d2d2d2;
  border-radius: 4px;
  font-size: 12px;
  line-height: 17px;
  font-weight: 700;
  white-space: nowrap;
}
.text-cursor {
  position: absolute;
  left: 8px;
  top: 10px;
  width: 7px;
  height: 17px;
}
.hotlist {
  height: 29px;
  padding: 0 4px 0 8px;
  display: flex;
  align-items: center;
  justify-content: space-between;
  border-bottom: 1px solid #c4c4c4;
}
.with-select {
  height: 36px;
}
.select {
  position: relative;
  display: flex;
}
.select::after {
  content: "▼";
  position: absolute;
  right: 5px;
  top: 0;
  font-size: 9px;
  line-height: 20px;
  color: #666;
  pointer-events: none;
}
select {
  appearance: none;
  width: 150px;
  height: 20px;
  padding: 0 5px;
  background: #f3f3f3;
  border: 1px solid #bbb;
  border-radius: 0;
  color: #777;
  font: 14px/18px Lato, sans-serif;
}
.social {
  list-style: none;
}
.social li {
  display: flex;
  align-items: center;
  gap: 9px;
  height: 29px;
  padding: 0 8px;
}
.social li:nth-child(even) {
  background: #f5f7f9;
}
.social svg {
  width: 18px;
  height: 18px;
}
.social .linked {
  gap: 11px;
  height: 31px;
  font-weight: 500;
}
.scrollbar {
  width: 16px;
  display: flex;
  flex-direction: column;
  align-items: center;
  background: #f1f1f1;
}
.arrow-up, .arrow-down {
  border: 4px solid transparent;
}
.arrow-up {
  margin: 7px 0 6px;
  border-bottom-color: #a3a3a3;
  border-top: 0;
}
.track-thumb {
  width: 13px;
  height: 161px;
  background: #bcbcbc;
}
.arrow-down {
  margin: auto 0 7px;
  border-top-color: #505050;
  border-bottom: 0;
}

/* sidebar */
.sidebar {
  width: 300px;
  flex: none;
  background: #f6f6f6;
  border-left: 3px solid #262a6e;
}
.side-tabs {
  display: flex;
  height: 40px;
  margin-left: -3px;
}
.side-tabs button {
  flex: 1;
  display: flex;
  align-items: center;
  justify-content: center;
  background: #ead2a6;
  border-right: 1px solid #dfc595;
  color: #262a6e;
}
.side-tabs svg {
  width: 16px;
  height: 16px;
}
.side-tabs .active {
  background: #262a6e;
  color: #fff;
}
.side-tabs .active svg {
  height: 18px;
}
.side-title {
  padding: 0 7px;
  background: #262a6e;
  color: #fff;
  font-size: 14px;
  line-height: 26px;
  font-weight: 700;
}
.sidebar h3 {
  display: flex;
  align-items: center;
  justify-content: space-between;
  height: 25px;
  padding: 0 15px 0 7px;
  background: #e8e8e8;
  font-size: 15px;
  font-weight: 500;
}
.sidebar h3 svg {
  width: 13px;
  height: 9px;
  color: #999;
}
.pinned {
  display: flex;
  height: 44px;
  padding: 5px 10px 0 8px;
  border-bottom: 1px solid #c4c4c4;
}
.pinned:last-child {
  border-bottom: 0;
}
.pinned > .dot, .pinned > .sq, .pinned > .tri {
  width: 13px;
  height: 13px;
  margin: 4px 7px 0 0;
}
.pinned a {
  flex: 1;
  height: 34px;
  padding-left: 1px;
  color: #111;
  line-height: 18px;
}
.pinned span {
  display: block;
  font-size: 13px;
  line-height: 16px;
  color: #777;
  white-space: nowrap;
}
.pinned .focused {
  outline: 1px dotted #333;
}
.pinned button {
  display: flex;
  flex-direction: column;
  align-items: center;
  width: 34px;
  margin-left: 2px;
  color: #777;
  font-size: 12px;
  line-height: 16px;
  gap: 1px;
}
.pinned button svg {
  width: 9px;
  height: 14px;
}
.roomy {
  height: 48px;
}
.roomy button {
  padding-top: 2px;
  gap: 3px;
}
```
